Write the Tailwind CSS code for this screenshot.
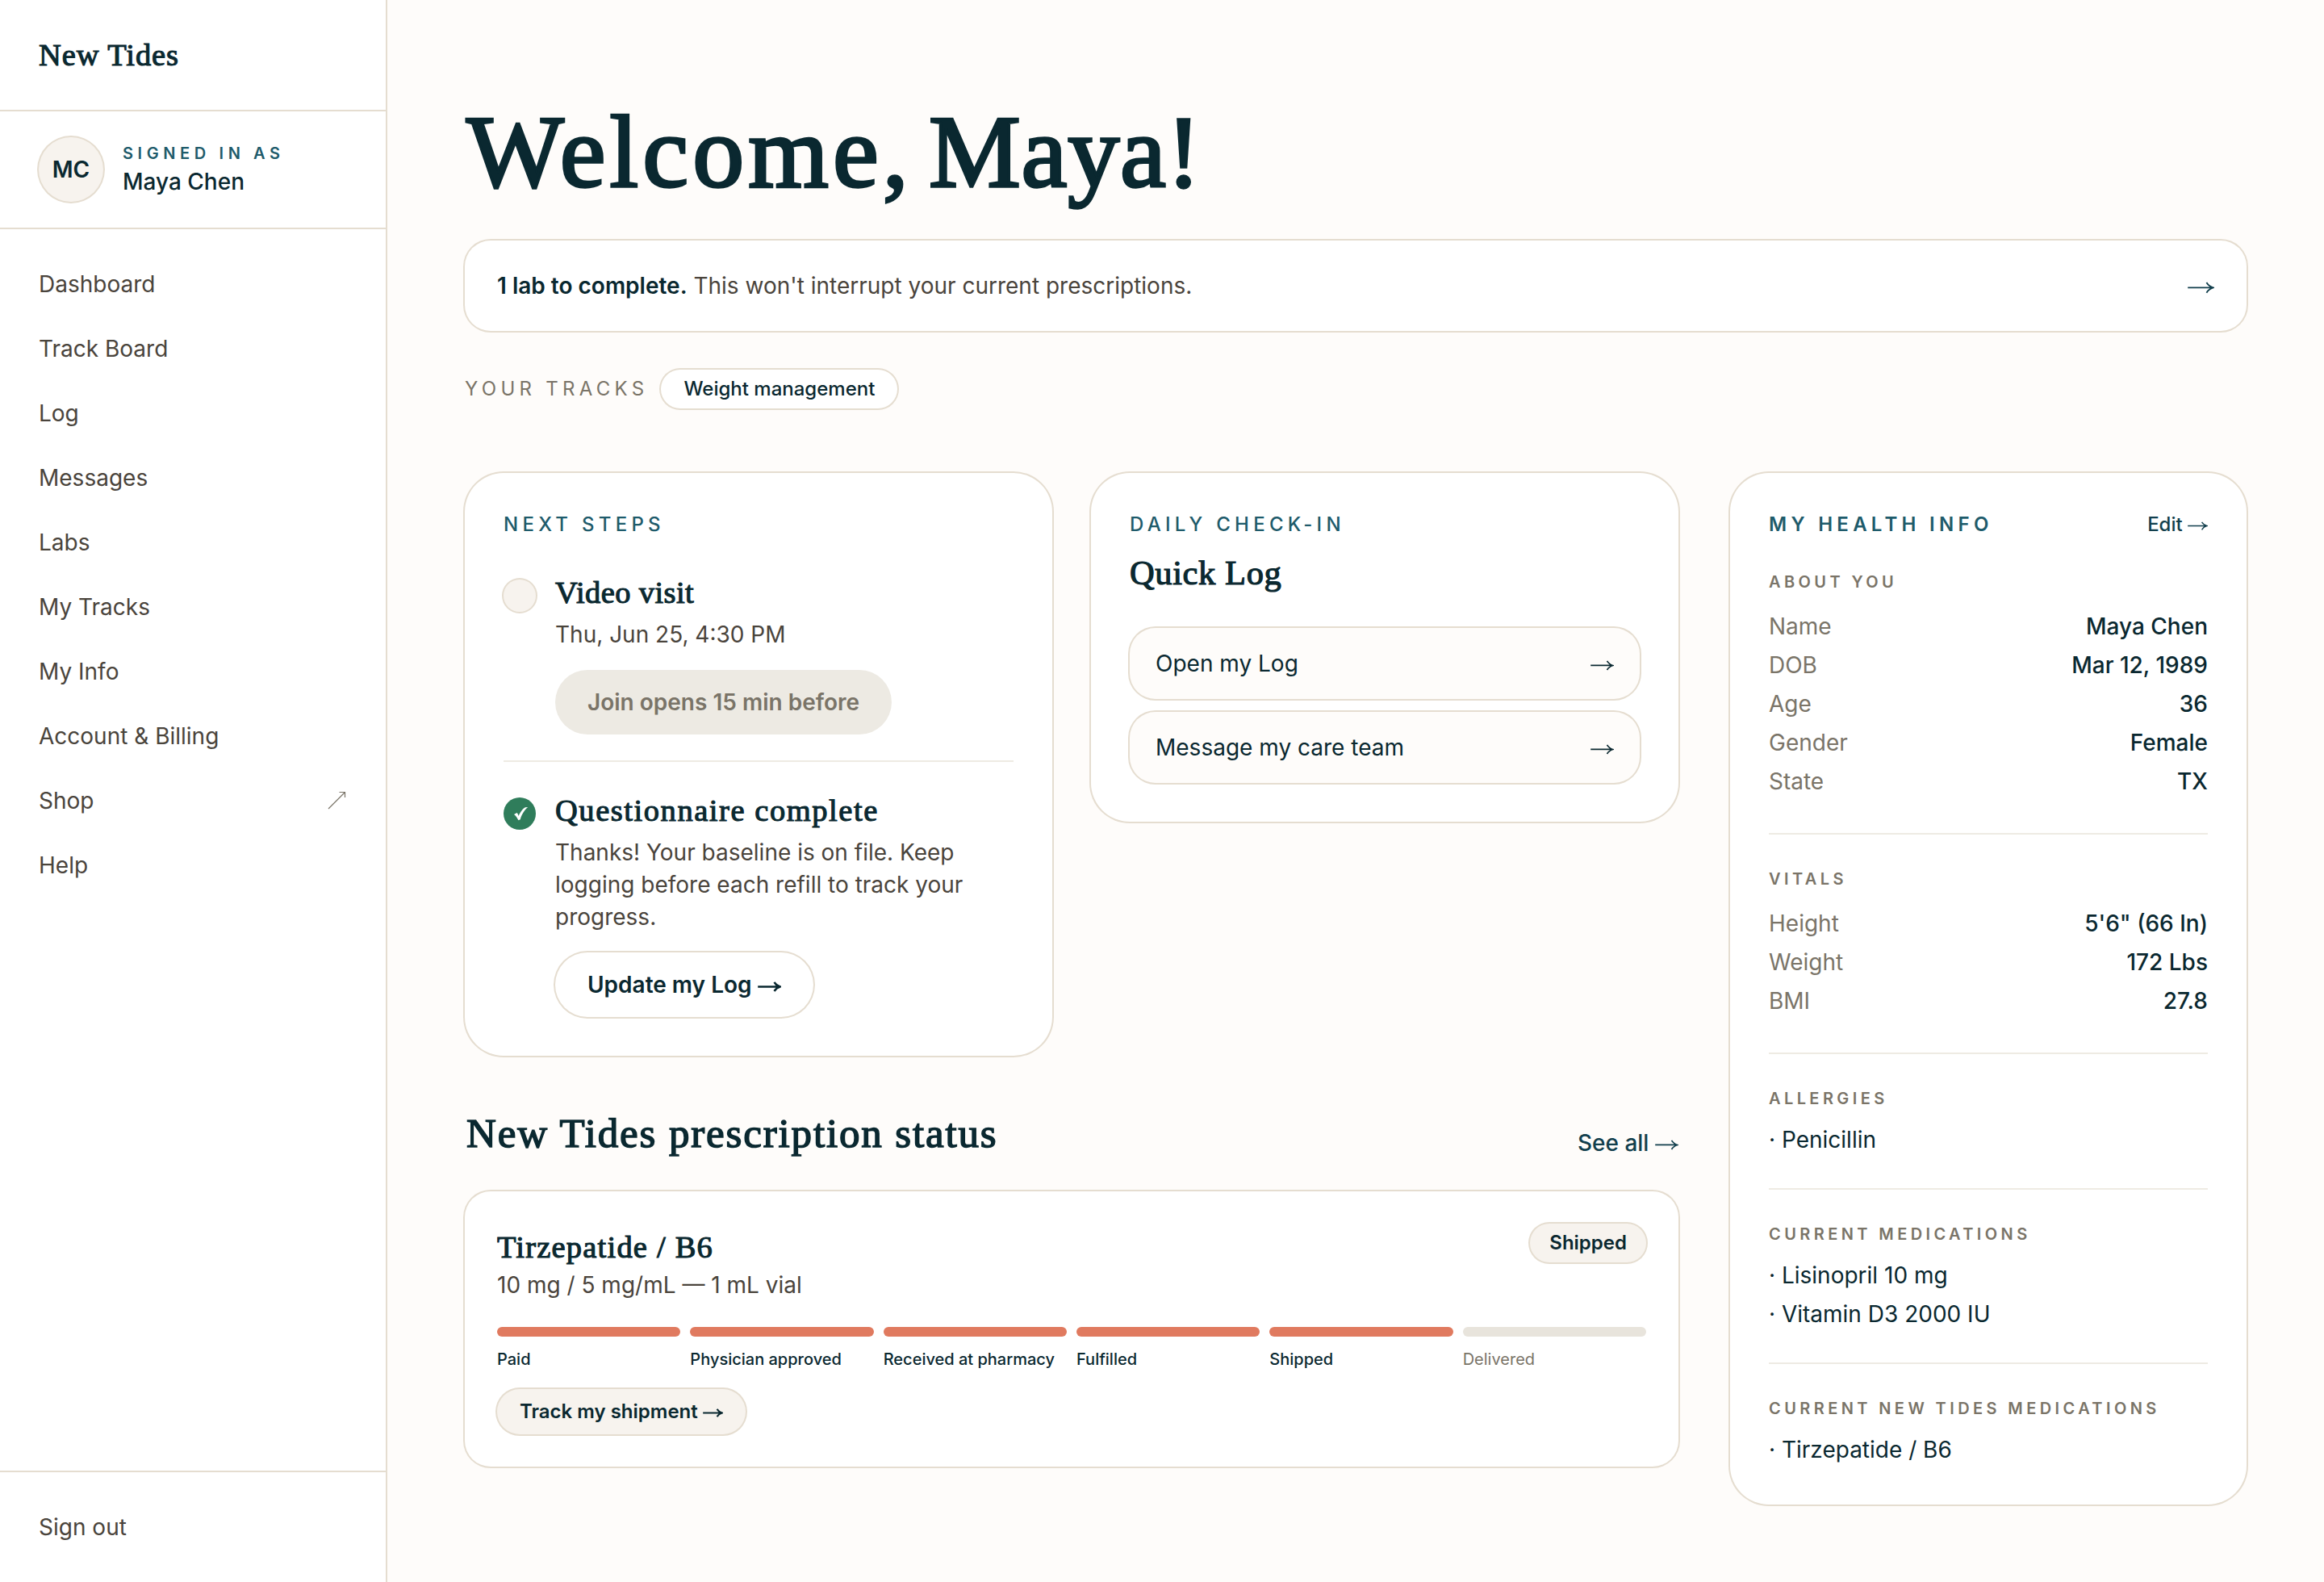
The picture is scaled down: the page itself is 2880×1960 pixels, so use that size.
<!DOCTYPE html>
<html lang="en">
<head>
    <meta charset="UTF-8">
    <title>New Tides</title>
    <script src="https://cdn.jsdelivr.net/npm/@tailwindcss/browser@4"></script>
</head>
<body class="bg-[#fefcfa] h-[1960px] w-[2880px] flex overflow-hidden font-['Inter',sans-serif] text-[28px] leading-10 text-[#0a2830]">
    <!-- Shared arrow icon, weight comes from stroke-width on each use -->
    <svg class="hidden">
        <symbol id="arrow" viewBox="0 0 29 13"><path d="M0 6.500H27.500M20.500 .9C22.200 3.700 24.500 5.600 27.800 6.500C24.500 7.400 22.200 9.300 20.500 12.100" fill="none" stroke="currentColor"/></symbol>
    </svg>

    <!-- Sidebar -->
    <aside class="w-[480px] shrink-0 bg-white border-r-2 border-[#e5ddd0] flex flex-col text-[#4a443c]">
        <div class="h-[138px] border-b-2 border-[#e5ddd0] px-12 flex items-center">
            <span class="font-['Liberation_Serif',serif] text-[38.5px] leading-none tracking-[0.9px] [-webkit-text-stroke:1.1px] text-[#0a2830]">New Tides</span>
        </div>
        <div class="h-[146px] border-b-2 border-[#e5ddd0] px-12 flex items-center gap-6">
            <div class="size-20 shrink-0 rounded-full bg-[#f7f3ee] ring-2 ring-[#e5ddd0] flex items-center justify-center font-semibold text-[#0a2830]">MC</div>
            <div>
                <div class="text-[20px] leading-[30px] font-semibold tracking-[5.6px] text-[#1e5b6b]">SIGNED IN AS</div>
                <div class="font-medium text-[#0a2830]">Maya Chen</div>
            </div>
        </div>
        <nav class="flex-1 pt-7 px-12">
            <a class="h-20 flex items-center">Dashboard</a>
            <a class="h-20 flex items-center">Track Board</a>
            <a class="h-20 flex items-center">Log</a>
            <a class="h-20 flex items-center">Messages</a>
            <a class="h-20 flex items-center">Labs</a>
            <a class="h-20 flex items-center">My Tracks</a>
            <a class="h-20 flex items-center">My Info</a>
            <a class="h-20 flex items-center">Account &amp; Billing</a>
            <a class="h-20 flex items-center justify-between">Shop
                <svg class="w-6 h-6 text-[#7a7468]" viewBox="0 0 24 24" fill="none" stroke="currentColor" stroke-width="1.2"><path d="M1 22 21.500 1.500M14.500 1.500h7v6.500"/></svg>
            </a>
            <a class="h-20 flex items-center">Help</a>
        </nav>
        <div class="h-[138px] border-t-2 border-[#e5ddd0] px-12 flex items-center">Sign out</div>
    </aside>

    <main class="flex-1 px-24 pt-[121px]">
        <h1 class="pl-0.5 font-['Liberation_Serif',serif] text-[128px] leading-[134px] tracking-[5.1px] [-webkit-text-stroke:3.4px]">Welcome,<span class="tracking-[-12px]"> </span><span class="tracking-[0.8px]">Maya!</span></h1>

        <!-- Labs banner -->
        <div class="mt-[43px] h-28 px-10 rounded-[32px] bg-white ring-2 ring-[#e5ddd0] flex items-center justify-between">
            <p class="text-[#4a443c]"><span class="font-semibold text-[#0a2830]">1 lab to complete.</span> This won't interrupt your current prescriptions.</p>
            <span class="text-[32px] text-[#123f4d]"><svg class="inline w-[1.04em] h-[0.46em] align-[0.045em]" stroke-width="1.6"><use href="#arrow"/></svg></span>
        </div>

        <div class="mt-12 flex items-center gap-4 text-[24px]">
            <span class="tracking-[5.28px] text-[#7a7468]">YOUR TRACKS</span>
            <span class="h-12 px-7 rounded-full bg-white ring-2 ring-[#e5ddd0] flex items-center font-medium">Weight management</span>
        </div>

        <div class="mt-20 flex items-start gap-16">
            <div class="w-[1504px]">
                <div class="grid grid-cols-2 gap-12 items-start">
                    <!-- Next steps -->
                    <section class="p-12 rounded-[48px] bg-white ring-2 ring-[#e5ddd0]">
                        <h2 class="text-[24px] leading-8 font-medium tracking-[5.28px] text-[#1e5b6b]">NEXT STEPS</h2>
                        <div class="mt-12 pb-8 border-b-2 border-[#eeebe3] flex items-start gap-6">
                            <span class="mt-1 size-10 shrink-0 rounded-full bg-[#f7f3ee] ring-2 ring-[#e5ddd0]"></span>
                            <div>
                                <h3 class="font-['Liberation_Serif',serif] text-[38.5px] leading-10 tracking-[0.4px] [-webkit-text-stroke:1.1px]">Video visit</h3>
                                <p class="mt-3 text-[#4a443c]">Thu, Jun 25, 4:30 PM</p>
                                <button class="mt-6 h-20 px-10 rounded-full bg-[#edeae3] font-semibold text-[#7a7468]">Join opens 15 min before</button>
                            </div>
                        </div>
                        <div class="pt-10 flex items-start gap-6">
                            <span class="mt-1 size-10 shrink-0 rounded-full bg-[#2f7d5b] flex items-center justify-center">
                                <svg class="w-10 h-10" viewBox="0 0 40 40" fill="#fff"><path d="M13 21l3.600-2c1 .9 1.600 2.300 2 4C20.500 18.500 23.500 14 27 12.200L30.200 12C25.500 16 22 22 20.800 27.200L18.400 28.200C17 25.500 15.500 23 13 21z"/></svg>
                            </span>
                            <div>
                                <h3 class="font-['Liberation_Serif',serif] text-[38.5px] leading-10 tracking-[1.55px] [-webkit-text-stroke:1.1px]">Questionnaire complete</h3>
                                <p class="mt-3 text-[#4a443c]">Thanks! Your baseline is on file. Keep logging before each refill to track your progress.</p>
                                <button class="mt-6 h-20 px-10 rounded-full bg-white ring-2 ring-[#e5ddd0] font-semibold">Update my Log <svg class="inline w-[1.04em] h-[0.46em] align-[0.045em]" stroke-width="2.5"><use href="#arrow"/></svg></button>
                            </div>
                        </div>
                    </section>

                    <!-- Quick log -->
                    <section class="p-12 rounded-[48px] bg-white ring-2 ring-[#e5ddd0]">
                        <h2 class="text-[24px] leading-8 font-medium tracking-[5.28px] text-[#1e5b6b]">DAILY CHECK-IN</h2>
                        <h3 class="mt-[18px] font-['Liberation_Serif',serif] text-[42.5px] leading-[52px] tracking-[0.6px] [-webkit-text-stroke:1.2px]">Quick Log</h3>
                        <div class="mt-[42px] flex flex-col gap-4">
                            <a class="h-[88px] px-8 rounded-[32px] bg-[#fefcfa] ring-2 ring-[#e5ddd0] flex items-center justify-between">Open my Log <span><svg class="inline w-[1.04em] h-[0.46em] align-[0.045em]" stroke-width="1.7"><use href="#arrow"/></svg></span></a>
                            <a class="h-[88px] px-8 rounded-[32px] bg-[#fefcfa] ring-2 ring-[#e5ddd0] flex items-center justify-between">Message my care team <span><svg class="inline w-[1.04em] h-[0.46em] align-[0.045em]" stroke-width="1.7"><use href="#arrow"/></svg></span></a>
                        </div>
                    </section>
                </div>

                <!-- Prescriptions -->
                <div class="mt-16 h-16 flex items-end justify-between">
                    <h2 class="pl-0.5 font-['Liberation_Serif',serif] text-[51px] leading-[64px] tracking-[1.85px] [-webkit-text-stroke:1.5px]">New Tides prescription status</h2>
                    <a class="font-medium text-[#123f4d]">See all <svg class="inline w-[1.04em] h-[0.46em] align-[0.045em]" stroke-width="1.7"><use href="#arrow"/></svg></a>
                </div>
                <section class="mt-10 p-10 h-[341px] rounded-[32px] bg-white ring-2 ring-[#e5ddd0]">
                    <div class="flex items-start justify-between">
                        <div class="pt-1">
                            <h3 class="font-['Liberation_Serif',serif] text-[38.5px] leading-[50px] tracking-[1.2px] [-webkit-text-stroke:1.1px]">Tirzepatide / B6</h3>
                            <p class="mt-0.5 text-[#4a443c]">10 mg / 5 mg/mL — 1 mL vial</p>
                        </div>
                        <span class="h-12 px-6 rounded-full bg-[#f7f3ee] ring-2 ring-[#e5ddd0] flex items-center text-[24px] font-semibold">Shipped</span>
                    </div>
                    <div class="mt-8 grid grid-cols-6 gap-x-3 text-[20px] leading-[30px] font-medium whitespace-nowrap">
                        <div><div class="h-3 mb-[13px] rounded-full bg-[#e07a5f]"></div>Paid</div>
                        <div><div class="h-3 mb-[13px] rounded-full bg-[#e07a5f]"></div>Physician approved</div>
                        <div><div class="h-3 mb-[13px] rounded-full bg-[#e07a5f]"></div>Received at pharmacy</div>
                        <div><div class="h-3 mb-[13px] rounded-full bg-[#e07a5f]"></div>Fulfilled</div>
                        <div><div class="h-3 mb-[13px] rounded-full bg-[#e07a5f]"></div>Shipped</div>
                        <div class="font-normal text-[#7a7468]"><div class="h-3 mb-[13px] rounded-full bg-[#e8e4dc]"></div>Delivered</div>
                    </div>
                    <button class="mt-[22px] h-14 px-7 block rounded-full bg-[#f7f3ee] ring-2 ring-[#e5ddd0] text-[24px] font-semibold">Track my shipment <svg class="inline w-[1.04em] h-[0.46em] align-[0.045em]" stroke-width="2.5"><use href="#arrow"/></svg></button>
                </section>
            </div>

            <!-- Health info -->
            <section class="w-[640px] p-12 rounded-[48px] bg-white ring-2 ring-[#e5ddd0]">
                <div class="mb-10 h-8 flex items-center justify-between text-[24px]">
                    <h2 class="font-semibold tracking-[5.28px] text-[#1e5b6b]">MY HEALTH INFO</h2>
                    <a class="font-medium text-[#123f4d]">Edit <svg class="inline w-[1.04em] h-[0.46em] align-[0.045em]" stroke-width="1.7"><use href="#arrow"/></svg></a>
                </div>

                <div class="pb-10">
                    <h3 class="mb-4 text-[20px] leading-[30px] font-semibold tracking-[4.4px] text-[#7a7468]">ABOUT YOU</h3>
                    <dl>
                        <div class="py-1 flex justify-between"><dt class="text-[#7a7468]">Name</dt><dd class="font-medium">Maya Chen</dd></div>
                        <div class="py-1 flex justify-between"><dt class="text-[#7a7468]">DOB</dt><dd class="font-medium">Mar 12, 1989</dd></div>
                        <div class="py-1 flex justify-between"><dt class="text-[#7a7468]">Age</dt><dd class="font-medium">36</dd></div>
                        <div class="py-1 flex justify-between"><dt class="text-[#7a7468]">Gender</dt><dd class="font-medium">Female</dd></div>
                        <div class="py-1 flex justify-between"><dt class="text-[#7a7468]">State</dt><dd class="font-medium">TX</dd></div>
                    </dl>
                </div>

                <div class="py-10 border-t-2 border-[#eeebe3]">
                    <h3 class="mb-4 text-[20px] leading-[30px] font-semibold tracking-[4.4px] text-[#7a7468]">VITALS</h3>
                    <dl>
                        <div class="py-1 flex justify-between"><dt class="text-[#7a7468]">Height</dt><dd class="font-medium">5'6" (66 In)</dd></div>
                        <div class="py-1 flex justify-between"><dt class="text-[#7a7468]">Weight</dt><dd class="font-medium">172 Lbs</dd></div>
                        <div class="py-1 flex justify-between"><dt class="text-[#7a7468]">BMI</dt><dd class="font-medium">27.8</dd></div>
                    </dl>
                </div>

                <div class="py-10 border-t-2 border-[#eeebe3]">
                    <h3 class="mb-4 text-[20px] leading-[30px] font-semibold tracking-[4.4px] text-[#7a7468]">ALLERGIES</h3>
                    <p>· Penicillin</p>
                </div>

                <div class="py-10 border-t-2 border-[#eeebe3]">
                    <h3 class="mb-4 text-[20px] leading-[30px] font-semibold tracking-[4.4px] text-[#7a7468]">CURRENT MEDICATIONS</h3>
                    <ul class="space-y-2">
                        <li>· Lisinopril 10 mg</li>
                        <li>· Vitamin D3 2000 IU</li>
                    </ul>
                </div>

                <div class="pt-10 border-t-2 border-[#eeebe3]">
                    <h3 class="mb-4 text-[20px] leading-[30px] font-semibold tracking-[4.4px] text-[#7a7468]">CURRENT NEW TIDES MEDICATIONS</h3>
                    <p>· Tirzepatide / B6</p>
                </div>
            </section>
        </div>
    </main>
</body>
</html>
